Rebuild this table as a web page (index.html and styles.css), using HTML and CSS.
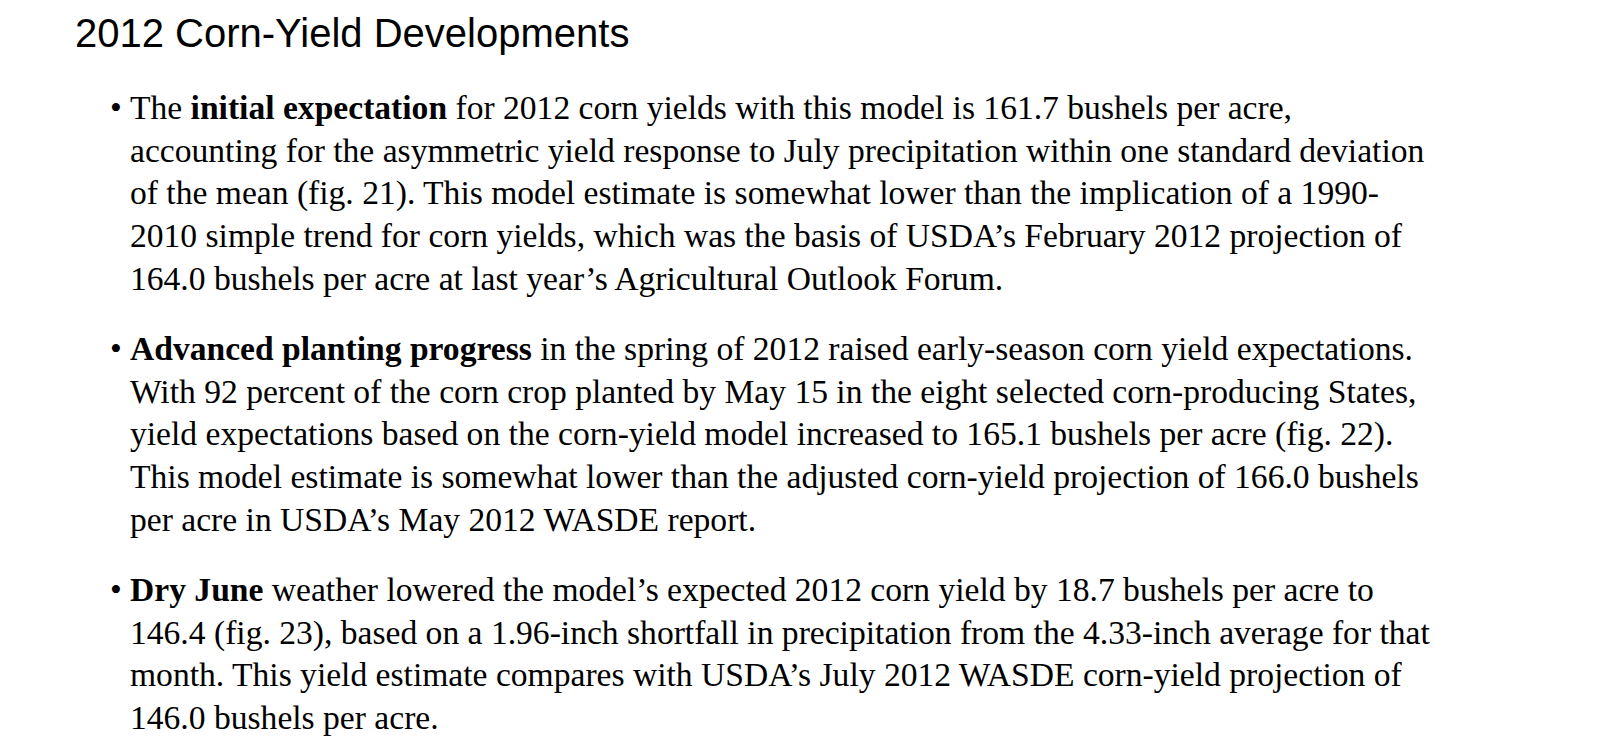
FILE: index.html
```html
<!DOCTYPE html>
<html lang="en">
<head>
<meta charset="utf-8">
<title>2012 Corn-Yield Developments</title>
<link rel="stylesheet" href="styles.css">
</head>
<body>
<main class="page">
  <h1 class="title">2012 Corn-Yield Developments</h1>
  <ul class="points">
    <li class="point">
      <span class="bullet">•</span>
      <p class="text">The <b>initial expectation</b> for 2012 corn yields with this model is 161.7 bushels per acre,<br>accounting for the asymmetric yield response to July precipitation within one standard deviation<br>of the mean (fig. 21). This model estimate is somewhat lower than the implication of a 1990-<br>2010 simple trend for corn yields, which was the basis of USDA’s February 2012 projection of<br>164.0 bushels per acre at last year’s Agricultural Outlook Forum.</p>
    </li>
    <li class="point">
      <span class="bullet">•</span>
      <p class="text"><b>Advanced planting progress</b> in the spring of 2012 raised early-season corn yield expectations.<br>With 92 percent of the corn crop planted by May 15 in the eight selected corn-producing States,<br>yield expectations based on the corn-yield model increased to 165.1 bushels per acre (fig. 22).<br>This model estimate is somewhat lower than the adjusted corn-yield projection of 166.0 bushels<br>per acre in USDA’s May 2012 WASDE report.</p>
    </li>
    <li class="point">
      <span class="bullet">•</span>
      <p class="text"><b>Dry June</b> weather lowered the model’s expected 2012 corn yield by 18.7 bushels per acre to<br>146.4 (fig. 23), based on a 1.96-inch shortfall in precipitation from the 4.33-inch average for that<br>month. This yield estimate compares with USDA’s July 2012 WASDE corn-yield projection of<br>146.0 bushels per acre.</p>
    </li>
  </ul>
</main>
</body>
</html>
```
FILE: styles.css
```css
html, body {
  margin: 0;
  padding: 0;
  background: #ffffff;
}

.page {
  padding: 13px 0 0 75px;
  color: #000000;
}

.title {
  margin: 0;
  font-family: "Liberation Sans", Arial, sans-serif;
  font-weight: normal;
  font-size: 40px;
  line-height: 40px;
  color: #000000;
}

.points {
  list-style: none;
  margin: 34px 0 0 0;
  padding: 0 0 0 35px;
  display: flex;
  flex-direction: column;
  gap: 27.5px;
}

.point {
  display: flex;
  font-family: "Liberation Serif", "Times New Roman", serif;
  font-size: 33.6px;
  line-height: 42.7px;
}

.bullet {
  width: 20px;
  flex: none;
}

.text {
  margin: 0;
  white-space: nowrap;
}

.text b {
  font-weight: bold;
}
```
